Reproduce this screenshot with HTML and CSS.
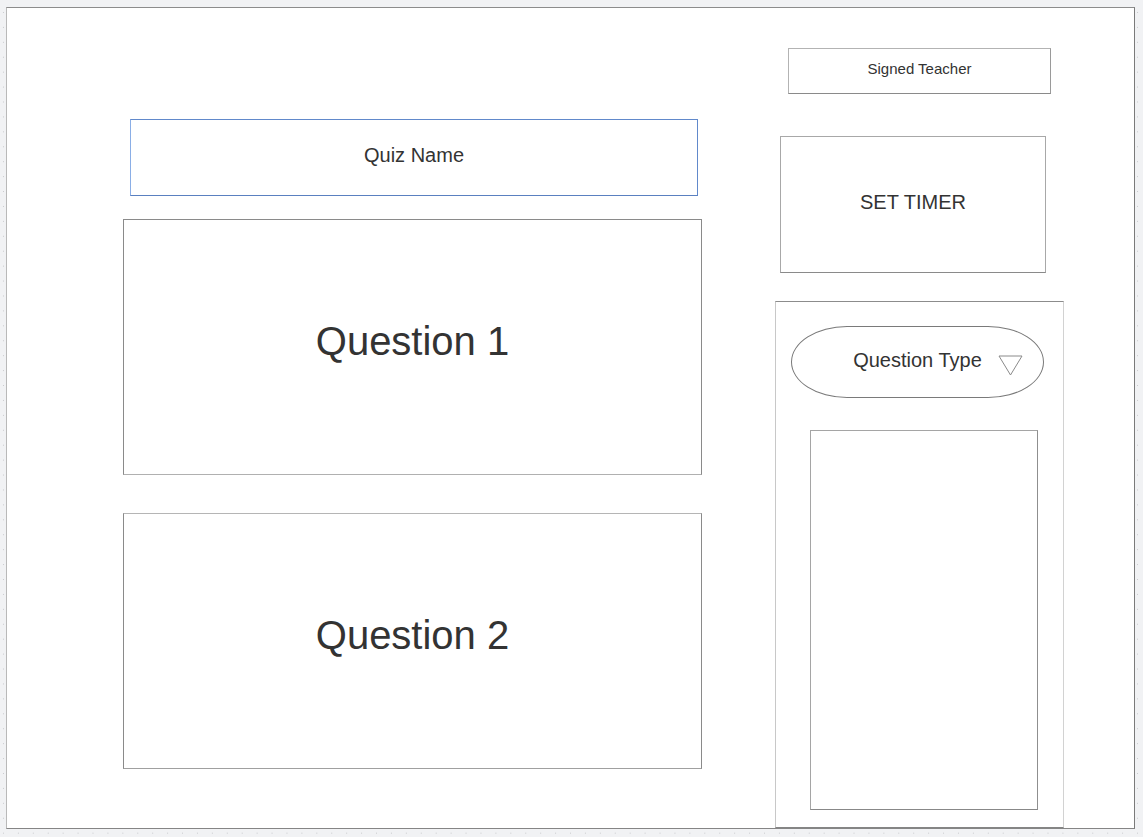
FILE: index.html
```html
<!DOCTYPE html>
<html lang="en">
<head>
<meta charset="utf-8">
<title>Quiz Builder Wireframe</title>
<link rel="stylesheet" href="styles.css">
</head>
<body>
<div class="canvas">
  <div class="col-left">
    <div class="quiz-name">Quiz Name</div>
    <div class="question q1">Question 1</div>
    <div class="question q2">Question 2</div>
  </div>
  <div class="col-right">
    <div class="signed">Signed Teacher</div>
    <div class="timer">SET TIMER</div>
    <div class="panel">
      <div class="qtype">
        <span>Question Type</span>
        <svg class="tri" width="25" height="21" viewBox="0 0 25 21"><polygon points="1,1 24,1 12.5,20" fill="none" stroke="#8a8a8a" stroke-width="1"/></svg>
      </div>
      <div class="inner-box"></div>
    </div>
  </div>
</div>
</body>
</html>
```

FILE: styles.css
```css
html, body {
  margin: 0;
  padding: 0;
}
body {
  width: 1143px;
  height: 837px;
  overflow: hidden;
  background-color: #f1f2f4;
  background-image: radial-gradient(circle, #c9cacd 0.7px, transparent 1px);
  background-size: 14.93px 14.93px;
  background-position: -4px 5px;
  font-family: "Liberation Sans", Arial, sans-serif;
  color: #333;
}
.canvas {
  box-sizing: border-box;
  margin: 7px 0 0 6px;
  width: 1129px;
  height: 822px;
  background: #fff;
  border-top: 1px solid #8c8c8c;
  border-right: 1px solid #7a7a7a;
  border-bottom: 1px solid #858585;
  border-left: 1px solid #b9b9b9;
  display: flex;
  align-items: flex-start;
}
.col-left {
  margin-left: 116px;
  width: 579px;
  display: flex;
  flex-direction: column;
}
.quiz-name {
  box-sizing: border-box;
  margin: 111px 0 0 7px;
  width: 568px;
  height: 77px;
  border: 1px solid #6189cb;
  border-left-color: #8aaee6;
  border-bottom-color: #5a80c0;
  display: flex;
  align-items: center;
  justify-content: center;
  font-size: 20px;
  padding-bottom: 5px;
}
.question {
  box-sizing: border-box;
  width: 579px;
  height: 256px;
  border: 1px solid #8a8a8a;
  border-bottom-color: #b0b0b0;
  display: flex;
  align-items: center;
  justify-content: center;
  font-size: 40px;
  padding-bottom: 12px;
}
.q1 { margin-top: 23px; }
.q2 { margin-top: 38px; border-top-color: #b5b5b5; border-bottom-color: #a0a0a0; }
.col-right {
  margin-left: 73px;
  width: 290px;
  display: flex;
  flex-direction: column;
  align-items: flex-start;
}
.signed {
  box-sizing: border-box;
  margin: 40px 0 0 13px;
  width: 263px;
  height: 46px;
  border: 1px solid #b3b3b3;
  border-bottom-color: #8a8a8a;
  border-right-color: #9a9a9a;
  display: flex;
  align-items: center;
  justify-content: center;
  font-size: 15px;
  padding-bottom: 6px;
}
.timer {
  box-sizing: border-box;
  margin: 42px 0 0 5px;
  width: 266px;
  height: 137px;
  border: 1px solid #a8a8a8;
  border-bottom-color: #8a8a8a;
  display: flex;
  align-items: center;
  justify-content: center;
  font-size: 20px;
  padding-bottom: 5px;
}
.panel {
  box-sizing: border-box;
  margin-top: 28px;
  width: 289px;
  height: 527px;
  border-top: 1px solid #8c8c8c;
  border-left: 1px solid #c8c8c8;
  border-right: 1px solid #d2d2d2;
  border-bottom: 1px solid #858585;
  padding: 24px 0 0 15px;
}
.qtype {
  position: relative;
  box-sizing: border-box;
  width: 253px;
  height: 72px;
  border: 1px solid #7a7a7a;
  border-radius: 56px / 36px;
  display: flex;
  align-items: center;
  justify-content: center;
  font-size: 20px;
  padding-bottom: 4px;
}
.tri {
  position: absolute;
  right: 20px;
  top: 28px;
}
.inner-box {
  box-sizing: border-box;
  margin: 32px 0 0 19px;
  width: 228px;
  height: 380px;
  border: 1px solid #a5a5a5;
  border-bottom-color: #888;
  border-right-color: #8f8f8f;
}
```
